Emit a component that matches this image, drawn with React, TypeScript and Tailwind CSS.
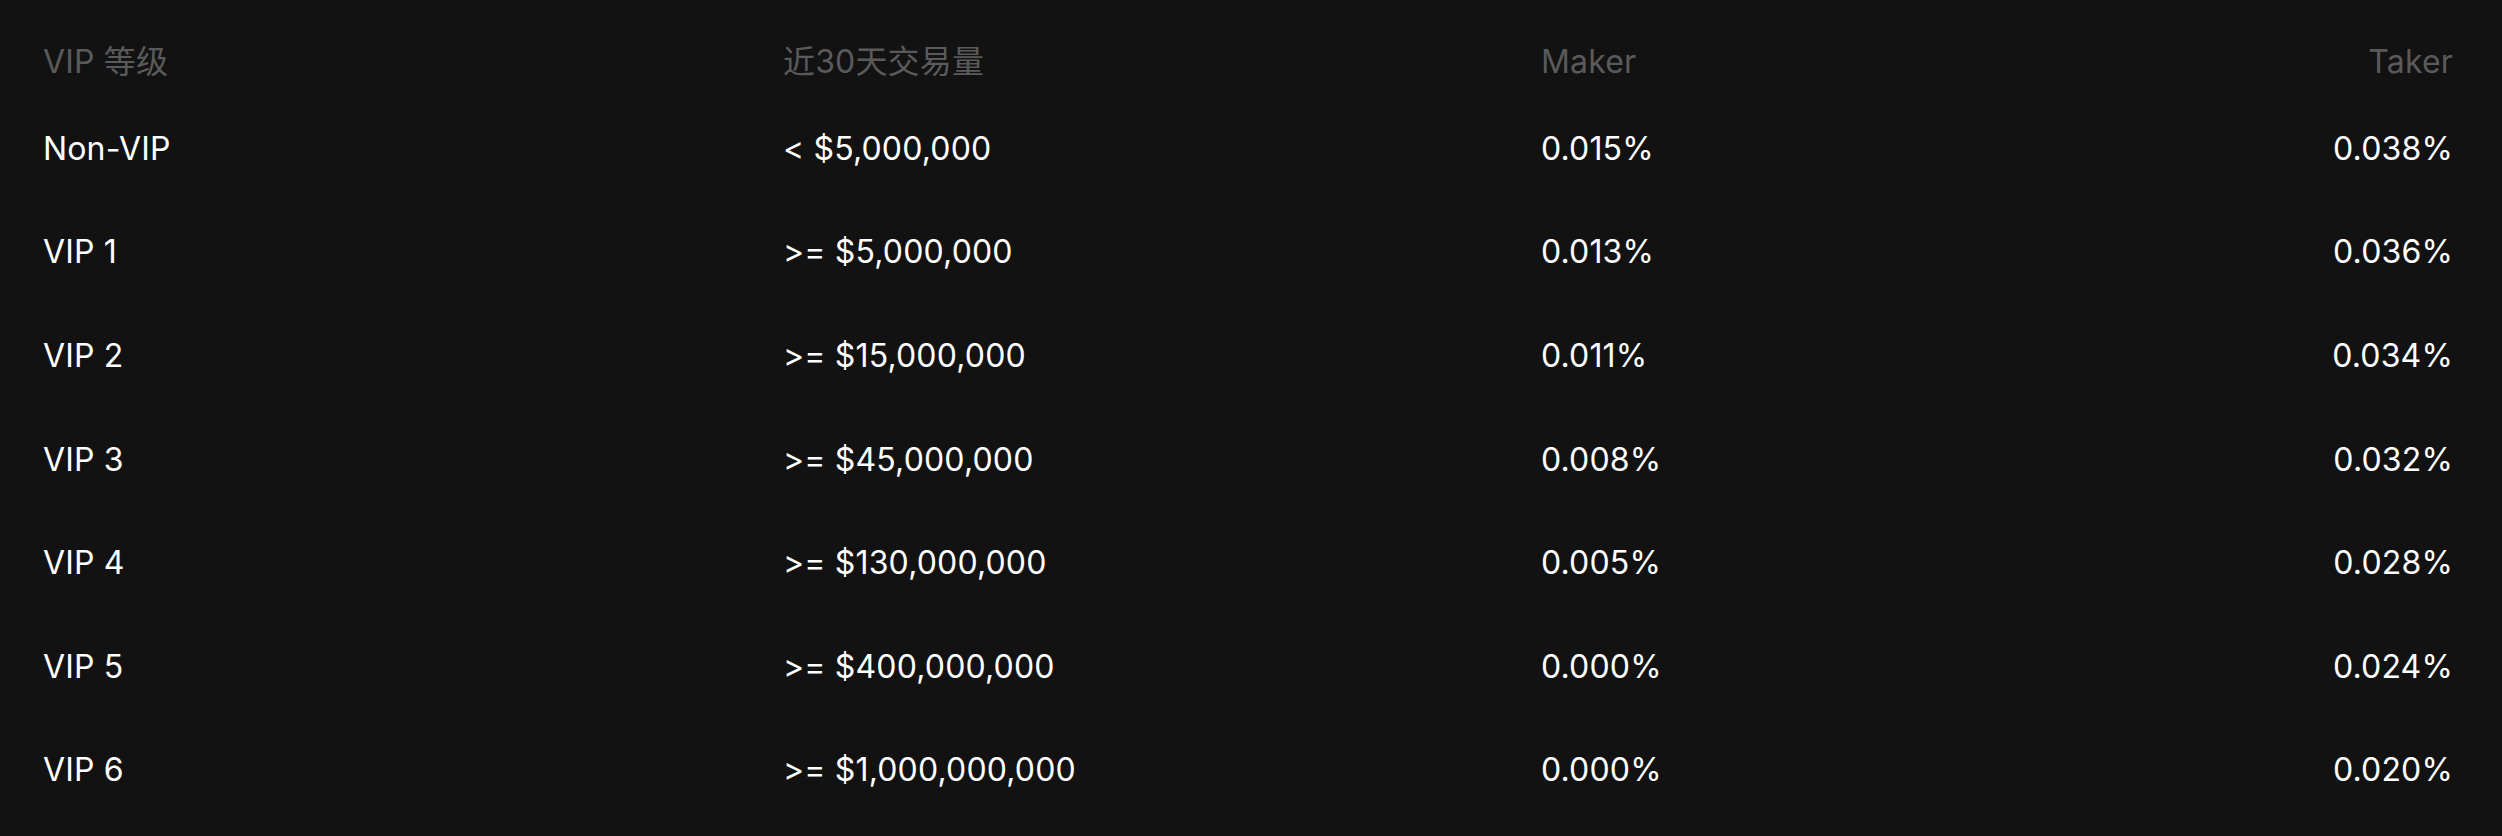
import React from 'react'

const tiers = [
  { level: 'Non-VIP', volume: '< $5,000,000', maker: '0.015%', taker: '0.038%' },
  { level: 'VIP 1', volume: '>= $5,000,000', maker: '0.013%', taker: '0.036%' },
  { level: 'VIP 2', volume: '>= $15,000,000', maker: '0.011%', taker: '0.034%' },
  { level: 'VIP 3', volume: '>= $45,000,000', maker: '0.008%', taker: '0.032%' },
  { level: 'VIP 4', volume: '>= $130,000,000', maker: '0.005%', taker: '0.028%' },
  { level: 'VIP 5', volume: '>= $400,000,000', maker: '0.000%', taker: '0.024%' },
  { level: 'VIP 6', volume: '>= $1,000,000,000', maker: '0.000%', taker: '0.020%' },
]

function App() {
  return (
    <div className="min-h-screen w-full bg-[#121212] font-['Inter','Noto_Sans_CJK_SC',sans-serif] text-[32px] tracking-[0.005em] text-white">
      <div className="pl-[43px] pr-[49px] pt-[26px]">
        <div className="grid h-[71px] grid-cols-[740px_758px_1fr_auto] items-center text-[#5a5a5a]">
          <div>VIP 等级</div>
          <div>近30天交易量</div>
          <div>Maker</div>
          <div className="text-right">Taker</div>
        </div>
        {tiers.map((tier) => (
          <div key={tier.level} className="grid h-[103.6px] grid-cols-[740px_758px_1fr_auto] items-center">
            <div>{tier.level}</div>
            <div>{tier.volume}</div>
            <div>{tier.maker}</div>
            <div className="text-right">{tier.taker}</div>
          </div>
        ))}
      </div>
    </div>
  )
}

export default App
